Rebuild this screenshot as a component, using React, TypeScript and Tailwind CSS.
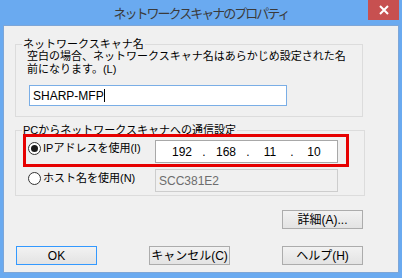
import React from "react";

const jp = { fontFamily: '"Liberation Sans", "Noto Sans CJK JP", sans-serif' };

function Radio({ checked }: { checked?: boolean }) {
  return (
    <div className="w-[13px] h-[13px] rounded-full border border-[#333333] bg-white flex items-center justify-center shrink-0">
      {checked && <div className="w-[7px] h-[7px] rounded-full bg-[#1a1a1a]" />}
    </div>
  );
}

function Btn({ children, primary }: { children: React.ReactNode; primary?: boolean }) {
  return (
    <div
      className={
        "w-[81px] h-[19px] flex items-center justify-center text-[12px] leading-none text-black bg-gradient-to-b from-[#f2f2f2] to-[#e3e3e3] border " +
        (primary ? "border-[#3399ff]" : "border-[#acacac]")
      }
    >
      {children}
    </div>
  );
}

export default function App() {
  const ip = ["192", "168", "11", "10"];
  return (
    <div className="w-[402px] h-[278px] bg-[#6aaaf0] flex flex-col overflow-hidden" style={jp}>
      <div className="h-[25px] relative flex items-center justify-center">
        <span className="text-[13px] tracking-[-2px] text-[#3a3a3a] leading-none pt-[1px]">
          ネットワークスキャナのプロパティ
        </span>
        <div className="absolute right-[3px] top-0 w-[31px] h-[20px] bg-[#c75050] flex items-center justify-center">
          <svg width="10" height="10" viewBox="0 0 10 10">
            <path d="M1 1 L9 9 M9 1 L1 9" stroke="white" strokeWidth="2" />
          </svg>
        </div>
      </div>
      <div className="mx-[3px] h-[248px] bg-[#f0f0f0] border border-[#7da6d8] flex flex-col">
        {/* group 1 */}
        <div className="ml-[11px] mt-[18px] w-[348px] h-[73px] border border-[#dcdcdc] flex flex-col">
          <span className="-mt-[8px] ml-[6px] px-[1px] w-fit bg-[#f0f0f0] text-[11px] leading-[14px] text-black">
            ネットワークスキャナ名
          </span>
          <div className="-mt-[1px] ml-[11px] text-[11px] leading-[13px] text-black whitespace-nowrap">
            空白の場合、ネットワークスキャナ名はあらかじめ設定された名
            <br />
            前になります。(L)
          </div>
          <div className="mt-[9px] ml-[13px] w-[258px] h-[21px] border border-[#7aaee6] bg-white flex items-center pl-[3px] text-[12px] text-black leading-none">
            SHARP-MFP
            <span className="inline-block w-[1px] h-[13px] bg-black" />
          </div>
        </div>
        {/* group 2 */}
        <div className="ml-[11px] mt-[13px] w-[350px] h-[66px] border border-[#dcdcdc] flex flex-col">
          <span className="-mt-[8px] ml-[6px] px-[1px] w-fit bg-[#f0f0f0] text-[11px] leading-[14px] text-black">
            PCからネットワークスキャナへの通信設定
          </span>
          <div className="-mt-[3px] ml-[7px] w-[326px] h-[33px] border-[3px] border-[#e60000] flex items-start">
            <div className="w-[129px] flex items-center pt-[4px] pl-[2px] gap-[2px]">
              <Radio checked />
              <span className="text-[11px] leading-[14px] text-black">IPアドレスを使用(I)</span>
            </div>
            <div className="mt-[3px] w-[183px] h-[23px] border border-[#a8a8a8] bg-white flex items-center pl-[8px] text-[12px] leading-none text-black">
              {ip.map((n, i) => (
                <React.Fragment key={i}>
                  <span className="w-[36px] text-center">{n}</span>
                  {i < 3 && <span className="w-[8px] text-center">.</span>}
                </React.Fragment>
              ))}
            </div>
          </div>
          <div className="ml-[10px] flex items-start">
            <div className="w-[129px] flex items-center pt-[4px] pl-[2px] gap-[2px]">
              <Radio />
              <span className="text-[11px] leading-[14px] text-black">ホスト名を使用(N)</span>
            </div>
            <div className="mt-[2px] w-[183px] h-[23px] border border-[#cdcdcd] bg-[#f0f0f0] flex items-center pl-[3px] text-[12px] leading-none text-[#6d6d6d]">
              SCC381E2
            </div>
          </div>
        </div>
        <div className="mt-[14px] ml-[278px]">
          <Btn>詳細(A)...</Btn>
        </div>
        <div className="mt-[17px] ml-[12px] flex gap-[52px]">
          <Btn primary>OK</Btn>
          <Btn>キャンセル(C)</Btn>
          <Btn>ヘルプ(H)</Btn>
        </div>
      </div>
    </div>
  );
}
